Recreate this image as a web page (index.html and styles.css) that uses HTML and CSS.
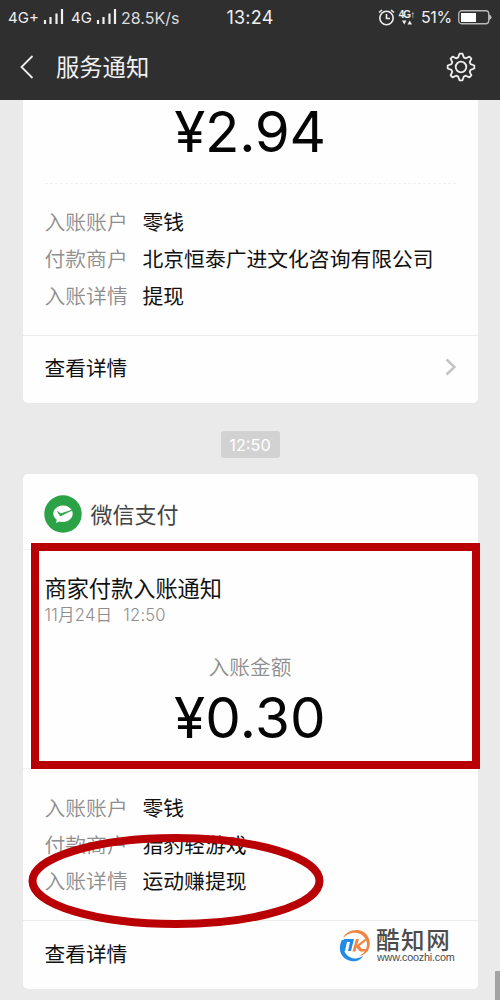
FILE: index.html
```html
<!DOCTYPE html>
<html lang="zh-CN">
<head>
<meta charset="utf-8">
<title>服务通知</title>
<link rel="stylesheet" href="styles.css">
</head>
<body>
<div class="screen">
  <header class="header">
    <div class="status">
      <div class="status-left">
        <span class="net">4G+</span>
        <svg class="bars" width="21" height="15" viewBox="0 0 21 15"><path d="M2 11v4M7.500 8v7M13.500 4.500v10.500M19 0v15" stroke="#eee" stroke-width="2.200"/></svg>
        <span class="net net-second">4G</span>
        <svg class="bars" width="21" height="15" viewBox="0 0 21 15"><path d="M2 11v4M7.500 8v7M13.500 4.500v10.500M19 0v15" stroke="#eee" stroke-width="2.200"/></svg>
        <span class="speed">28.5K/s</span>
      </div>
      <span class="clock">13:24</span>
      <div class="status-right">
        <svg width="17" height="17" viewBox="0 0 17 17" fill="none" stroke="#eee" stroke-width="1.600"><circle cx="8.500" cy="9" r="6.700"/><path d="M8.500 5v4.500H12M1 3.500 4 1M13 1l3 2.500"/></svg>
        <div class="data"><span>4G↑</span><svg width="10" height="5" viewBox="0 0 10 5" fill="#eee"><path d="M0 .5h4.500L2.250 4.500zM5.500 4.500H10L7.750.5z"/></svg></div>
        <span class="percent">51%</span>
        <svg width="34" height="15" viewBox="0 0 34 15"><rect x=".75" y=".75" width="30" height="13" rx="3" fill="none" stroke="#bbb" stroke-width="1.300"/><path d="M3 3h15v9H3z" fill="#fff"/><path d="M31 4.500q2.500.5 2.500 2.750T31 10z" fill="#bbb"/></svg>
      </div>
    </div>
    <div class="nav">
      <svg class="back" width="14" height="24" viewBox="0 0 14 24"><path d="M12.500 1 1.500 12l11 11" fill="none" stroke="#eee" stroke-width="1.800"/></svg>
      <h1 class="title">服务通知</h1>
      <svg class="gear" width="30" height="30" viewBox="-15 -15 30 30" fill="none" stroke="#eee" stroke-width="1.800" stroke-linejoin="round"><circle r="5.300"/><path d="M-1.500-13.300H1.500L2.800-9.600 4.900-8.700 8.400-10.400 10.400-8.400 8.700-4.900 9.600-2.800 13.300-1.500V1.500L9.600 2.800 8.700 4.900 10.400 8.400 8.400 10.400 4.900 8.700 2.800 9.600 1.500 13.300H-1.500L-2.800 9.600-4.900 8.700-8.400 10.400-10.400 8.400-8.700 4.900-9.600 2.800-13.300 1.500V-1.500L-9.600-2.800-8.700-4.900-10.400-8.400-8.400-10.400-4.900-8.700-2.800-9.600z"/></svg>
    </div>
  </header>
  <main class="chat">
    <section class="card card-first">
      <div class="amount">¥2.94</div>
      <div class="dashes"></div>
      <dl class="details">
        <dt>入账账户</dt><dd>零钱</dd>
        <dt>付款商户</dt><dd>北京恒泰广进文化咨询有限公司</dd>
        <dt>入账详情</dt><dd>提现</dd>
      </dl>
      <div class="more"><span>查看详情</span><svg width="12" height="18" viewBox="0 0 12 18"><path d="m1.500 1.500 8 7.500-8 7.500" fill="none" stroke="#c4c4c4" stroke-width="2.500"/></svg></div>
    </section>
    <div class="time">12:50</div>
    <section class="card">
      <div class="sender">
        <svg width="38" height="38" viewBox="0 0 38 38"><circle cx="19" cy="19" r="18.700" fill="#2aa245"/><path d="M19 10.500c5.500 0 9.700 3.700 9.700 8.200s-4.200 8.200-9.700 8.200q-1.800 0-3.500-.5L12.200 28l.5-3.300c-2-1.500-3.400-3.600-3.400-6 0-4.500 4.200-8.200 9.700-8.200z" fill="#fff"/><path d="m13.500 16.500 2.800 4.500 12-6-11.500 3.800z" fill="#2aa245" stroke="#2aa245" stroke-width=".7"/></svg>
        <span>微信支付</span>
      </div>
      <div class="notice">
        <h2 class="notice-title">商家付款入账通知</h2>
        <div class="date">11月24日<span class="date-time">12:50</span></div>
        <div class="amount-label">入账金额</div>
        <div class="amount amount-second">¥0.30</div>
      </div>
      <dl class="details details-second">
        <dt>入账账户</dt><dd>零钱</dd>
        <dt>付款商户</dt><dd>猎豹轻游戏</dd>
        <dt>入账详情</dt><dd>运动赚提现</dd>
      </dl>
      <div class="more more-second"><span>查看详情</span></div>
    </section>
  </main>
  <div class="mark-box"></div>
  <svg class="mark-oval" width="296" height="96" viewBox="0 0 296 96"><ellipse cx="148" cy="48" rx="143.500" ry="43" fill="none" stroke="#b90004" stroke-width="8"/></svg>
  <div class="watermark">
    <svg width="34" height="36" viewBox="0 0 34 36" fill="none"><path d="M5 10C9 1 23-1 29 7c6 9 2 19-8 21 8-4 10-12 6-18C22 3 12 3 5 10z" fill="#f08442"/><path d="M4 12c-5 9-1 19 9 21 5 1 10-1 12-5-6 4-13 3-17-2-3-4-3-8-1-14z" fill="#238be4"/><path d="M6 11h10l-3 12h-3l2-9h-3l-2 9H4z" fill="#238be4"/><path d="M18 11h3l-2 6 8-6h3l-8.500 7 2.500 3h5l1 2.500h-8l-3.500-4-1 4h-3z" fill="#f08442"/></svg>
    <div class="brand"><span class="brand-name">酷知网</span><span class="brand-url">www.coozhi.com</span></div>
  </div>
  <div class="scrollbar"></div>
</div>
</body>
</html>
```

FILE: styles.css
```css
* { box-sizing: border-box; }
body, h1, h2, dl, dd { margin: 0; }
body { font-family: "Noto Sans CJK SC", sans-serif; }
.screen {
  position: relative;
  width: 500px;
  height: 1000px;
  overflow: hidden;
  background: #eaeaea;
}
.header { height: 100px; background: #2f2f2f; color: #f0f0f0; }
.status {
  display: grid;
  grid-template-columns: 200px 100px 1fr;
  height: 34px;
  align-items: center;
  font-family: Inter, sans-serif;
}
.status-left { display: flex; align-items: center; padding: 1px 0 0 8px; font-size: 15px; }
.net { width: 31px; font-size: 15px; letter-spacing: 0; margin-right: 4px; }
.net-second { width: 21px; margin: 0 4px 0 7px; }
.bars { flex: none; margin-top: -2px; }
.speed { margin-left: 4px; font-size: 16px; color: #ddd; }
.clock { text-align: center; font-size: 18px; letter-spacing: 0.2px; }
.status-right { display: flex; align-items: center; padding-left: 78px; }
.data {
  display: flex;
  flex-direction: column;
  align-items: center;
  width: 19px;
  margin-left: 2px;
  font: 600 10px/10px "Liberation Sans", sans-serif;
  letter-spacing: -0.9px;
}
.percent { width: 33px; margin: 0 4px 0 5px; font-size: 16px; letter-spacing: -0.4px; }
.nav { display: flex; align-items: center; height: 66px; padding: 0 24px 0 20px; }
.title { margin: -2px 0 0 22px; font-size: 23.3px; font-weight: 400; line-height: 34px; }
.gear { margin-left: auto; }
.chat { display: flex; flex-direction: column; align-items: center; }
.card {
  display: flex;
  flex-direction: column;
  width: 455px;
  height: 515px;
  border-radius: 5px;
  background: #fefefe;
}
.card-first { height: 303px; border-radius: 0 0 5px 5px; }
.amount {
  height: 64px;
  text-align: center;
  font: 400 56.5px/64px Inter, sans-serif;
  letter-spacing: -0.3px;
  color: #050505;
}
.amount-second { padding-top: 5px; letter-spacing: 0.3px; }
.dashes { height: 1px; margin: 19px 22px 0; border-top: 1px dashed #f0f0f0; }
.details {
  display: grid;
  grid-template-columns: 98px 1fr;
  grid-auto-rows: 36.7px;
  height: 152px;
  padding: 19.4px 0 0 22px;
  border-bottom: 1px solid #ebebeb;
  font-size: 20.8px;
  line-height: 36.7px;
  white-space: nowrap;
}
.details-second { padding-top: 20px; }
.details dt { color: #8e8e8e; font-weight: 350; }
.details dd { color: #111; }
.more {
  display: flex;
  align-items: center;
  justify-content: space-between;
  height: 63px;
  padding: 0 21px 2px 22px;
  font-size: 20.7px;
  color: #111;
}
.more-second { padding-bottom: 0; }
.time {
  width: 59px;
  height: 27px;
  margin: 28px 0 16px;
  border-radius: 3px;
  background: #d2d2d2;
  color: #fff;
  text-align: center;
  font: 400 16.3px/28px Inter, sans-serif;
}
.sender {
  display: flex;
  align-items: center;
  height: 75px;
  padding: 5px 0 0 21px;
  gap: 9px;
  font-size: 22px;
  color: #444;
}
.sender span { margin-top: -2px; }
.notice { height: 220px; padding: 20px 0 0; border-top: 1px solid #f2f2f2; border-bottom: 1px solid #f2f2f2; }
.notice-title { padding-left: 22px; font-size: 22.2px; font-weight: 400; line-height: 34px; color: #111; }
.date { padding-left: 22px; font: 350 16.6px/22px Inter, "Noto Sans CJK SC", sans-serif; letter-spacing: 0.2px; color: #8e8e8e; }
.date-time { margin-left: 11px; }
.amount-label { margin-top: 25px; text-align: center; font-size: 20.7px; font-weight: 350; line-height: 30px; color: #8e8e8e; }
.mark-box {
  position: absolute;
  left: 31px;
  top: 543px;
  width: 449px;
  height: 226px;
  border: 8px solid #b90004;
}
.mark-oval { position: absolute; left: 28px; top: 833px; }
.watermark { position: absolute; left: 338px; top: 928px; display: flex; }
.brand { display: flex; flex-direction: column; margin-left: 4px; color: #4c4c4c; }
.brand-name { margin-top: -1px; font-size: 23.5px; font-weight: 500; line-height: 24px; letter-spacing: 1.6px; }
.brand-url { padding-left: 1px; font: 10.8px/12px "Liberation Sans", sans-serif; letter-spacing: -0.2px; }
.scrollbar { position: absolute; left: 495px; top: 971px; width: 5px; height: 29px; background: #a3a3a3; }
```
